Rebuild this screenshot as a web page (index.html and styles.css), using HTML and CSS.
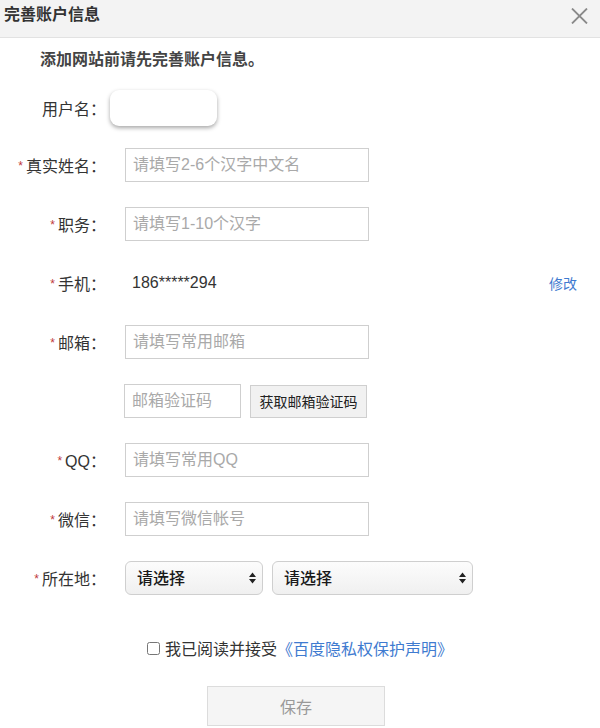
FILE: index.html
```html
<!DOCTYPE html>
<html lang="zh-CN">
<head>
    <meta charset="UTF-8">
    <meta name="viewport" content="width=device-width, initial-scale=1.0">
    <title>完善账户信息</title>
    <link rel="stylesheet" href="styles.css">
</head>

<body>
    <div class="dialog-header">
        <span class="dialog-title">完善账户信息</span>
        <span class="dialog-close">
            <svg width="17" height="16" viewBox="0 0 17 16">
                <path d="M1 0.5 L16 15.5 M16 0.5 L1 15.5" stroke="#8a8a8a" stroke-width="1.8" fill="none"/>
            </svg>
        </span>
    </div>

    <div class="notice">添加网站前请先完善账户信息。</div>

    <form class="account-form">
        <div class="form-row row-user">
            <label class="form-label">用户名：</label>
            <div class="user-box"></div>
        </div>

        <div class="form-row">
            <label class="form-label"><span class="req">*</span>真实姓名：</label>
            <input class="text-input" type="text" placeholder="请填写2-6个汉字中文名">
        </div>

        <div class="form-row">
            <label class="form-label"><span class="req">*</span>职务：</label>
            <input class="text-input" type="text" placeholder="请填写1-10个汉字">
        </div>

        <div class="form-row">
            <label class="form-label"><span class="req">*</span>手机：</label>
            <span class="phone">186*****294</span>
            <a class="edit-link" href="#">修改</a>
        </div>

        <div class="form-row">
            <label class="form-label"><span class="req">*</span>邮箱：</label>
            <input class="text-input" type="text" placeholder="请填写常用邮箱">
        </div>

        <div class="form-row">
            <label class="form-label"></label>
            <input class="text-input code-input" type="text" placeholder="邮箱验证码">
            <button class="code-button" type="button">获取邮箱验证码</button>
        </div>

        <div class="form-row">
            <label class="form-label"><span class="req">*</span>QQ：</label>
            <input class="text-input" type="text" placeholder="请填写常用QQ">
        </div>

        <div class="form-row">
            <label class="form-label"><span class="req">*</span>微信：</label>
            <input class="text-input" type="text" placeholder="请填写微信帐号">
        </div>

        <div class="form-row">
            <label class="form-label"><span class="req">*</span>所在地：</label>
            <span class="select-wrap select-province">
                <select class="area-select">
                    <option>请选择</option>
                </select>
                <svg class="select-arrow" width="7" height="12" viewBox="0 0 7 12">
                    <path d="M0 5 L3.5 0.5 L7 5 Z M0 7 L3.5 11.5 L7 7 Z" fill="#222"/>
                </svg>
            </span>
            <span class="select-wrap select-city">
                <select class="area-select">
                    <option>请选择</option>
                </select>
                <svg class="select-arrow" width="7" height="12" viewBox="0 0 7 12">
                    <path d="M0 5 L3.5 0.5 L7 5 Z M0 7 L3.5 11.5 L7 7 Z" fill="#222"/>
                </svg>
            </span>
        </div>

        <div class="agree-row">
            <input class="agree-check" type="checkbox" id="agree">
            <label for="agree">我已阅读并接受</label>
            <a class="agree-link" href="#">《百度隐私权保护声明》</a>
        </div>

        <div class="submit-row">
            <button class="save-button" type="submit">保存</button>
        </div>
    </form>
</body>
</html>
```

FILE: styles.css
```css
body {
    margin: 0;
    width: 600px;
    font-family: "Liberation Sans", "Noto Sans CJK SC", sans-serif;
    font-size: 16px;
    color: #333;
    background-color: #fff;
}

.dialog-header {
    display: flex;
    justify-content: space-between;
    align-items: flex-start;
    height: 38px;
    padding: 5px 12px 0 4px;
    box-sizing: border-box;
    background-color: #f3f3f3;
    border-bottom: 1px solid #e2e2e2;
}

.dialog-title {
    font-size: 16px;
    line-height: 20px;
    font-weight: bold;
    color: #333;
}

.dialog-close {
    display: flex;
    padding-top: 3px;
}

.notice {
    margin: 12px 0 0 40px;
    line-height: 20px;
    font-size: 16px;
    font-weight: bold;
    color: #444;
}

.account-form {
    display: flex;
    flex-direction: column;
    gap: 25px;
    margin-top: 20px;
}

.form-row {
    display: flex;
    align-items: center;
    height: 34px;
}

.row-user {
    height: 36px;
    margin-bottom: -3px;
}

.form-label {
    width: 106px;
    flex-shrink: 0;
    text-align: right;
    font-size: 16px;
    color: #333;
    white-space: nowrap;
}

.req {
    color: #c0393b;
    font-size: 12px;
    margin-right: 3px;
    vertical-align: 2px;
}

.user-box {
    width: 107px;
    height: 36px;
    margin-left: 4px;
    background-color: #fff;
    border-radius: 9px;
    box-shadow: 0 2px 4px rgba(0, 0, 0, 0.35);
}

.text-input {
    width: 244px;
    height: 34px;
    margin-left: 19px;
    padding: 0 7px;
    box-sizing: border-box;
    border: 1px solid #cfcfcf;
    font-family: inherit;
    font-size: 16px;
    color: #333;
    outline: none;
}

.text-input::placeholder {
    color: #a9a9a9;
}

.code-input {
    width: 117px;
    margin-left: 18px;
}

.code-button {
    width: 117px;
    height: 33px;
    margin-left: 9px;
    border: 1px solid #cfcfcf;
    background-color: #f1f1f1;
    font-family: inherit;
    font-size: 14px;
    color: #222;
    padding: 0;
}

.phone {
    margin-left: 26px;
    font-size: 16px;
    color: #333;
}

.edit-link {
    margin-left: auto;
    margin-right: 23px;
    font-size: 14px;
    color: #3f7bd0;
    text-decoration: none;
}

.select-wrap {
    position: relative;
    display: inline-flex;
    margin-left: 19px;
}

.select-city {
    margin-left: 9px;
}

.area-select {
    appearance: none;
    -webkit-appearance: none;
    width: 138px;
    height: 34px;
    padding: 0 11px;
    border: 1px solid #cfcfcf;
    border-radius: 6px;
    background: linear-gradient(#fcfcfc, #f0f0f0);
    font-family: inherit;
    font-size: 16px;
    font-weight: 500;
    color: #1a1a1a;
    outline: none;
}

.select-city .area-select {
    width: 201px;
}

.select-arrow {
    position: absolute;
    right: 7px;
    top: 11px;
    pointer-events: none;
}

.agree-row {
    display: flex;
    justify-content: center;
    align-items: center;
    height: 20px;
    margin-top: 18px;
    font-size: 16px;
    color: #333;
}

.agree-check {
    width: 13px;
    height: 13px;
    margin: 0 5px 0 0;
}

.agree-link {
    color: #3f7bd0;
    text-decoration: none;
}

.submit-row {
    display: flex;
    margin-top: 3px;
    padding-left: 207px;
}

.save-button {
    width: 178px;
    height: 40px;
    border: 1px solid #dcdcdc;
    background-color: #f5f5f5;
    font-family: inherit;
    font-size: 16px;
    color: #999;
    padding: 0;
}
```
